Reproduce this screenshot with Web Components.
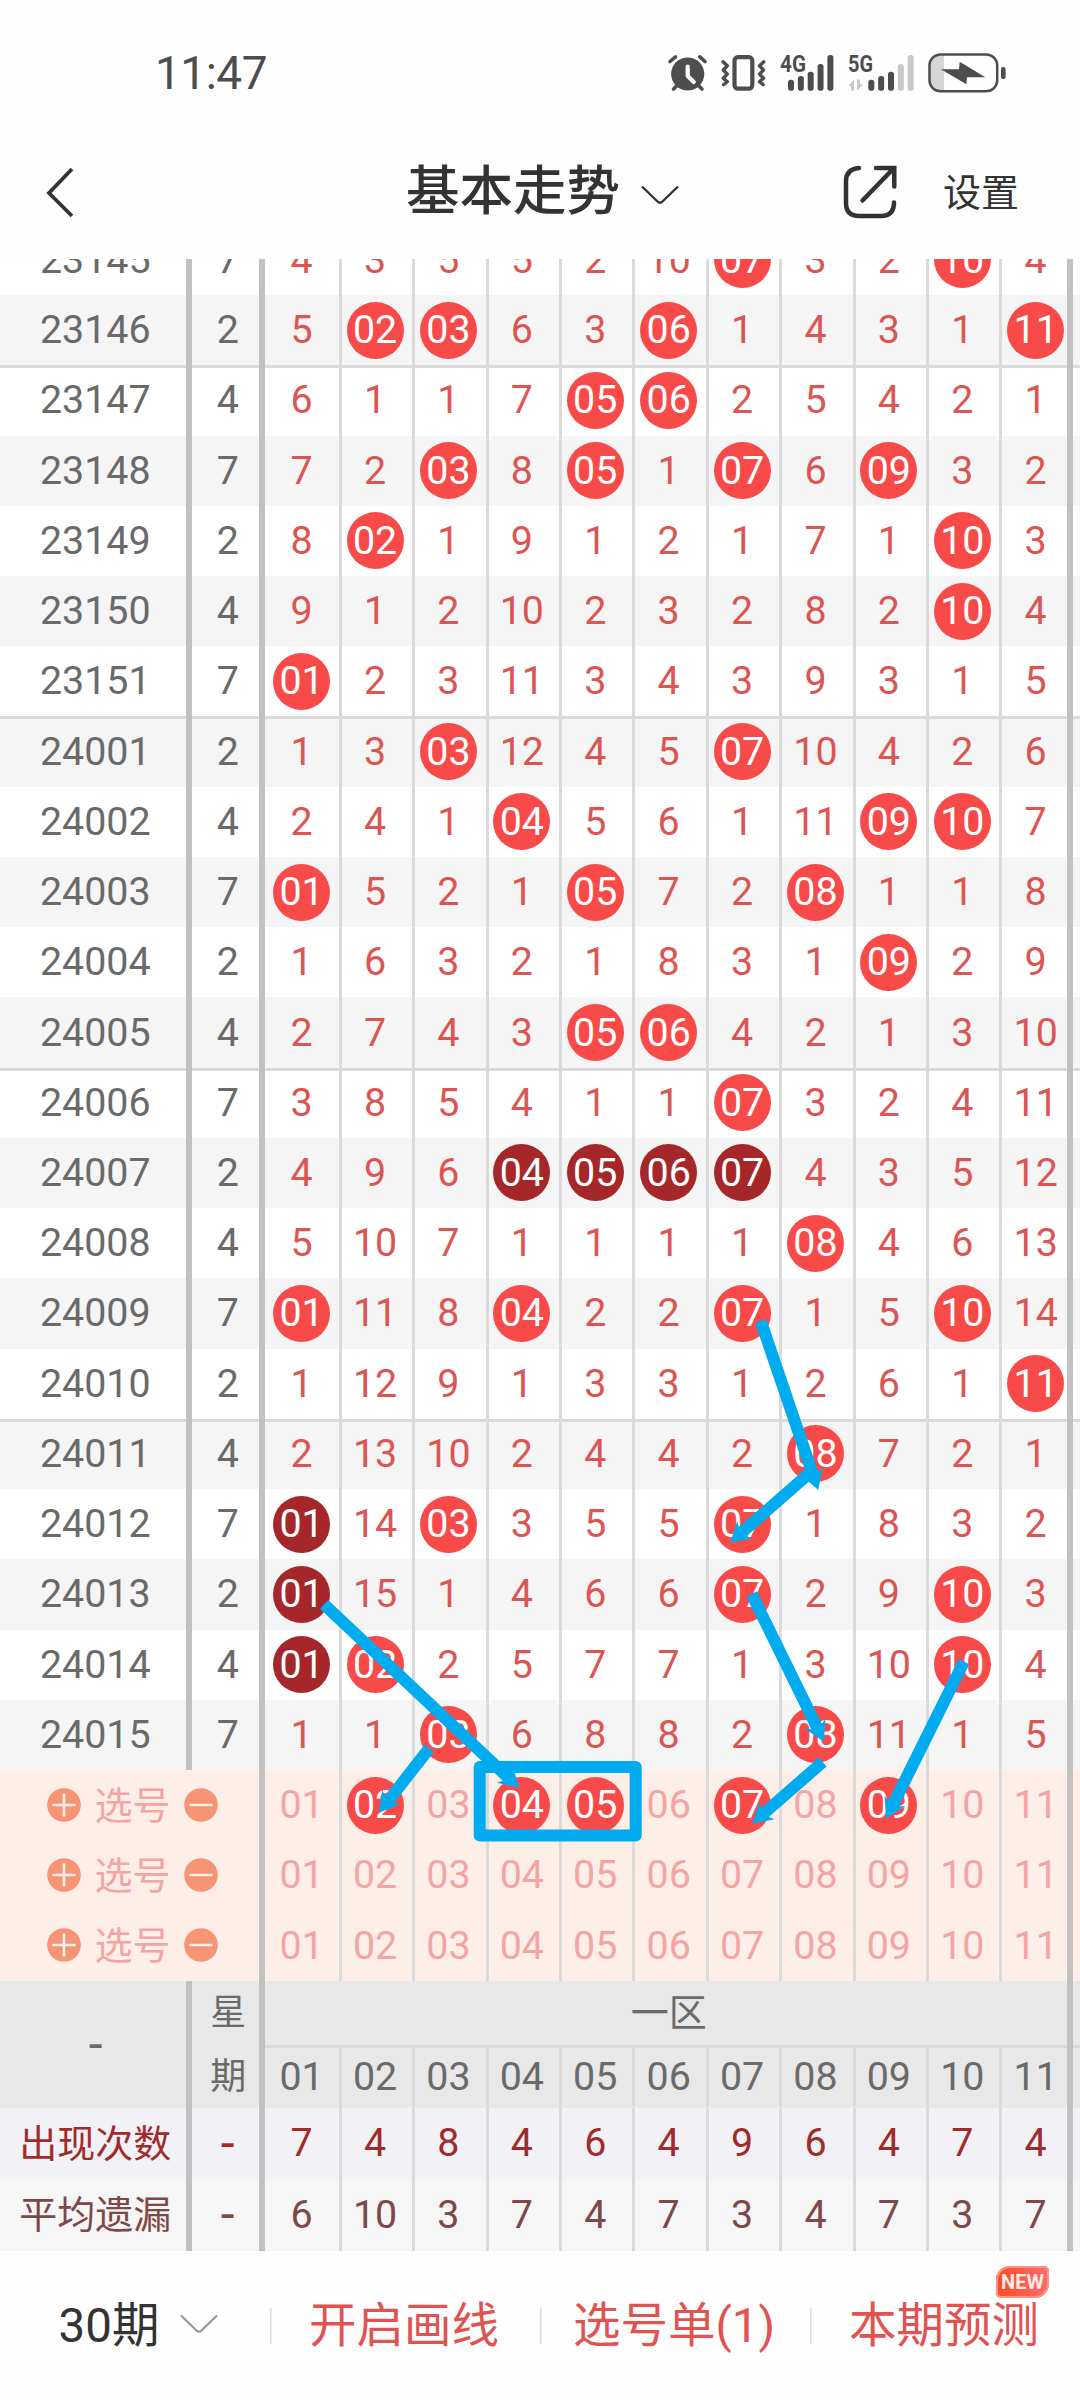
<!DOCTYPE html>
<html lang="zh-CN">
<head>
<meta charset="UTF-8">
<meta name="viewport" content="width=device-width, initial-scale=1">
<title>基本走势</title>
<style>
  html, body {
    margin: 0;
    padding: 0;
    background: #fefefe;
  }
  body {
    width: 1080px;
    height: 2400px;
    overflow: hidden;
    font-family: Roboto, "Noto Sans CJK SC", sans-serif;
    color: #333;
  }
</style>
</head>
<body>
<trend-app></trend-app>

<script>
// '*' = drawn number, '!' = drawn number in a repeated run
const draws = [
  ['23145', 7, '4 3 5 5 2 10 *07 3 2 *10 4'],
  ['23146', 2, '5 *02 *03 6 3 *06 1 4 3 1 *11'],
  ['23147', 4, '6 1 1 7 *05 *06 2 5 4 2 1'],
  ['23148', 7, '7 2 *03 8 *05 1 *07 6 *09 3 2'],
  ['23149', 2, '8 *02 1 9 1 2 1 7 1 *10 3'],
  ['23150', 4, '9 1 2 10 2 3 2 8 2 *10 4'],
  ['23151', 7, '*01 2 3 11 3 4 3 9 3 1 5'],
  ['24001', 2, '1 3 *03 12 4 5 *07 10 4 2 6'],
  ['24002', 4, '2 4 1 *04 5 6 1 11 *09 *10 7'],
  ['24003', 7, '*01 5 2 1 *05 7 2 *08 1 1 8'],
  ['24004', 2, '1 6 3 2 1 8 3 1 *09 2 9'],
  ['24005', 4, '2 7 4 3 *05 *06 4 2 1 3 10'],
  ['24006', 7, '3 8 5 4 1 1 *07 3 2 4 11'],
  ['24007', 2, '4 9 6 !04 !05 !06 !07 4 3 5 12'],
  ['24008', 4, '5 10 7 1 1 1 1 *08 4 6 13'],
  ['24009', 7, '*01 11 8 *04 2 2 *07 1 5 *10 14'],
  ['24010', 2, '1 12 9 1 3 3 1 2 6 1 *11'],
  ['24011', 4, '2 13 10 2 4 4 2 *08 7 2 1'],
  ['24012', 7, '!01 14 *03 3 5 5 *07 1 8 3 2'],
  ['24013', 2, '!01 15 1 4 6 6 *07 2 9 *10 3'],
  ['24014', 4, '!01 *02 2 5 7 7 1 3 10 *10 4'],
  ['24015', 7, '1 1 *03 6 8 8 2 *08 11 1 5']
];

const picks = [
  '01 *02 03 *04 *05 06 *07 08 *09 10 11',
  '01 02 03 04 05 06 07 08 09 10 11',
  '01 02 03 04 05 06 07 08 09 10 11'
];

// from x, y to x, y on the table
const arrows = [
  [760.7, 1062, 818.2, 1231],
  [812, 1212, 730, 1283.7],
  [751.7, 1335, 824, 1482.7],
  [822.7, 1503, 752, 1564.7],
  [964, 1402.7, 886, 1559.7],
  [324, 1345.3, 519.3, 1529],
  [429.3, 1489.3, 379, 1553.7]
];

class StatusBar extends HTMLElement {
  constructor() {
    super();
    this.attachShadow({ mode: 'open' });
  }

  connectedCallback() {
    const tops = [34.7, 31, 26.7, 19, 10];
    const bars = (x, on) => tops.map((y, i) =>
      `<rect x="${x + i * 9.85}" y="${y}" width="6" height="${45.7 - y}" rx="2.8" fill="${i < on ? '#4d4d4d' : '#c8c8c8'}"/>`
    ).join('');

    this.shadowRoot.innerHTML = `
      <style>
        :host {
          display: flex;
          justify-content: space-between;
          box-sizing: border-box;
          height: 125px;
          padding: 45px 70px 0 155px;
          color: #4d4d4d;
        }
        .time {
          font-size: 46px;
          line-height: 57px;
          letter-spacing: -.5px;
        }
        text {
          font: bold 23.5px Roboto, sans-serif;
        }
      </style>
      <span class="time">11:47</span>
      <svg width="350" height="60" viewBox="0 0 350 60" fill="#4d4d4d">
        <circle cx="27.7" cy="29" r="16.6"/>
        <path d="M27.7 21.500v9.500l6 6" fill="none" stroke="#fff" stroke-width="4.200" stroke-linecap="round"/>
        <path d="M10 16.500l5.500-4.700M39.800 11.800l5.200 4.700M13.500 44l4-4M42 44l-4-4" stroke="#4d4d4d" stroke-width="3.600" stroke-linecap="round"/>
        <rect x="74.500" y="12.200" width="17.800" height="31.500" rx="3.500" fill="none" stroke="#4d4d4d" stroke-width="4.200"/>
        <path d="M63 16.800l4.300 4-4 4.200 4 4.100-4 4.100 4 3.500-3.700 3M103.800 16.800l-4.300 4 4 4.200-4 4.100 4 4.100-4 3.500 3.700 3" fill="none" stroke="#4d4d4d" stroke-width="3.400" stroke-linecap="round" stroke-linejoin="round"/>
        <text x="120" y="27.300" textLength="26" lengthAdjust="spacingAndGlyphs">4G</text>
        ${bars(128, 5)}
        <text x="188" y="27.300" textLength="25" lengthAdjust="spacingAndGlyphs">5G</text>
        ${bars(208.300, 3)}
        <path d="M188.500 41l5.500-6.500v11h-3V41zM197 34.500v11l6-6h-3v-5z" fill="#c8c8c8"/>
        <path d="M284 10v36h-4q-10 0-10-10V20q0-10 10-10z" fill="#d6d6d6"/>
        <rect x="269.500" y="9.500" width="67.700" height="36.800" rx="11" fill="none" stroke="#4d4d4d" stroke-width="2.500"/>
        <path d="M281 24.300h18l.7-7.600 25.600 15.600H307l-.7 7z"/>
        <rect x="341" y="22" width="4.600" height="12" rx="2"/>
      </svg>
    `;
  }
}

class NavBar extends HTMLElement {
  constructor() {
    super();
    this.attachShadow({ mode: 'open' });
  }

  connectedCallback() {
    this.shadowRoot.innerHTML = `
      <style>
        :host {
          display: grid;
          grid-template-columns: 1fr auto 1fr;
          align-items: center;
          box-sizing: border-box;
          height: 134px;
          padding: 0 61px 0 46px;
        }
        svg {
          display: block;
          fill: none;
          stroke: #333;
        }
        .title {
          display: flex;
          align-items: center;
          gap: 21px;
          margin-left: 20px;
          font-size: 53.5px;
          font-weight: 500;
          line-height: 76px;
        }
        .title svg {
          margin-top: 5px;
        }
        .right {
          display: flex;
          align-items: center;
          justify-content: flex-end;
          gap: 46px;
          font-size: 38px;
        }
        .right span {
          padding-bottom: 6px;
        }
      </style>
      <svg width="30" height="52" viewBox="0 0 30 52" stroke-width="3.800">
        <path d="M26 3L3 27l23 23"/>
      </svg>
      <div class="title">
        <slot></slot>
        <svg width="38" height="20" viewBox="0 0 38 20" stroke-width="2.400">
          <path d="M1 1.500L16.500 16.500q2.500 2.400 5 0L37 1.500"/>
        </svg>
      </div>
      <div class="right">
        <svg width="54" height="54" viewBox="0 0 54 54" stroke-width="4.500" stroke-linecap="round">
          <path d="M16 3Q3 4 3 16v22q0 13 13 13h22q13 0 13-13.500M33 3h18.300v18.500M50 4L19.500 35.500"/>
        </svg>
        <span>设置</span>
      </div>
    `;
  }
}

class NumberCell extends HTMLElement {
  constructor() {
    super();
    this.attachShadow({ mode: 'open' });
  }

  connectedCallback() {
    this.shadowRoot.innerHTML = `
      <style>
        :host {
          display: flex;
          align-items: center;
          justify-content: center;
          min-width: 0;
          background: linear-gradient(#dadada, #dadada) .4px 0 / 3px 100% no-repeat;
        }
        :host(:first-of-type) {
          background: none;
        }
        span {
          display: flex;
          align-items: center;
          justify-content: center;
          box-sizing: border-box;
          width: 57px;
          height: 57px;
          padding-bottom: 1px;
          border-radius: 50%;
        }
        :host([hit]) span {
          background: #f94a4a;
          color: #fff;
        }
        :host([hit="repeat"]) span {
          background: #a62729;
        }
      </style>
      <span><slot></slot></span>
    `;
  }
}

class TrendRow extends HTMLElement {
  constructor() {
    super();
    this.attachShadow({ mode: 'open' });
  }

  connectedCallback() {
    const cells = this.getAttribute('numbers').split(' ').map((value) => {
      const hit = value[0] === '*' ? ' hit' : value[0] === '!' ? ' hit="repeat"' : '';
      return `<number-cell${hit}>${value.replace(/[*!]/, '')}</number-cell>`;
    }).join('');

    this.shadowRoot.innerHTML = `
      <style>
        :host {
          display: grid;
          grid-template-columns: 191.5px repeat(12, 73.42px);
          box-sizing: border-box;
          height: 70.24px;
          font-size: 39.4px;
          color: #dc5552;
          background: #fff;
        }
        :host([shade]) {
          background: #f5f5f5;
        }
        :host([line]) {
          box-shadow: inset 0 3px #dadada;
        }
        :host([kind="pick"]) {
          background: #feeee8;
          color: #f3a5a4;
        }
        :host([kind="count"]) {
          height: 70.6px;
          background: #f2f1f6;
          color: #a02b2b;
        }
        :host([kind="miss"]) {
          height: 72px;
          background: #f6f6f6;
          color: #7e4848;
        }
        .label, .week {
          display: flex;
          align-items: center;
          justify-content: center;
          border-right: 6px solid #c1c1c1;
          padding: 0 0 1px 5px;
          color: #6a6a6a;
        }
        :host([kind="count"]) .label, :host([kind="miss"]) .label {
          padding-bottom: 6px;
          font-size: 38px;
        }
        :host([kind="count"]) .week, :host([kind="miss"]) .week {
          font-size: 50px;
        }
        :host([kind="count"]) div, :host([kind="miss"]) div {
          color: inherit;
        }
        :host([kind="pick"]) .label {
          grid-column: span 2;
          justify-content: flex-start;
          padding-left: 47px;
          gap: 13.5px;
          font-size: 38px;
          color: inherit;
        }
        :host([kind="pick"]) .week {
          display: none;
        }
        ::slotted(span) {
          padding-bottom: 5px;
        }
      </style>
      <div class="label"><slot></slot></div>
      <div class="week">${this.getAttribute('week') || ''}</div>
      ${cells}
    `;
  }
}

class RoundButton extends HTMLElement {
  constructor() {
    super();
    this.attachShadow({ mode: 'open' });
  }

  connectedCallback() {
    const plus = this.getAttribute('type') === 'plus';
    this.shadowRoot.innerHTML = `
      <style>
        :host, svg {
          display: block;
        }
      </style>
      <svg width="34" height="34" viewBox="0 0 34 34">
        <circle cx="17" cy="17" r="16.800" fill="#f59576"/>
        <path d="M6.500 17h21${plus ? 'M17 6.500v21' : ''}" stroke="#feeee8" stroke-width="2.600" stroke-linecap="round"/>
      </svg>
    `;
  }
}

class ZoneHeader extends HTMLElement {
  constructor() {
    super();
    this.attachShadow({ mode: 'open' });
  }

  connectedCallback() {
    let cells = '';
    for (let i = 1; i <= 11; i++) {
      cells += `<number-cell>${String(i).padStart(2, '0')}</number-cell>`;
    }
    this.shadowRoot.innerHTML = `
      <style>
        :host {
          display: grid;
          grid-template-columns: 191.5px 73.42px 1fr;
          height: 127.4px;
          background: #e8e8e8;
          color: #6a6a6a;
          font-size: 39.4px;
        }
        .label, .week {
          display: flex;
          flex-direction: column;
          align-items: center;
          justify-content: center;
          border-right: 6px solid #c1c1c1;
          padding-left: 6px;
        }
        .label {
          padding-bottom: 2px;
          font-size: 50px;
        }
        .week {
          font-size: 36px;
          line-height: 64px;
        }
        .name {
          display: flex;
          align-items: center;
          justify-content: center;
          box-sizing: border-box;
          height: 64px;
          padding: 0 7.5px 7px 0;
          font-size: 38px;
        }
        .numbers {
          display: grid;
          grid-template-columns: repeat(11, 73.42px);
          box-sizing: border-box;
          height: 63.4px;
          padding-bottom: 2px;
          border-top: 3px solid #dadada;
          background: linear-gradient(#dadada, #dadada) 73.8px 100% / 3px 2px no-repeat;
        }
        number-cell {
          height: 60.4px;
          margin-top: -1px;
        }
      </style>
      <div class="label">-</div>
      <div class="week"><span>星</span><span>期</span></div>
      <div>
        <div class="name">一区</div>
        <div class="numbers">${cells}</div>
      </div>
    `;
  }
}

class DrawingLayer extends HTMLElement {
  constructor() {
    super();
    this.attachShadow({ mode: 'open' });
  }

  arrow([x1, y1, x2, y2]) {
    const length = Math.hypot(x2 - x1, y2 - y1);
    const angle = Math.atan2(y2 - y1, x2 - x1) * 180 / Math.PI;
    return `<path transform="translate(${x1} ${y1}) rotate(${angle})"
      d="M0-6H${length - 17}L${length - 20}-11.500L${length} 0L${length - 20} 11.500L${length - 17} 6H0z"/>`;
  }

  connectedCallback() {
    this.shadowRoot.innerHTML = `
      <style>
        :host {
          display: block;
          pointer-events: none;
        }
      </style>
      <svg width="1080" height="1992" viewBox="0 0 1080 1992" fill="#00abf0">
        ${arrows.map((item) => this.arrow(item)).join('')}
        <rect x="479.700" y="1508" width="156" height="68.500" fill="none" stroke="#00abf0" stroke-width="12" stroke-linejoin="round"/>
      </svg>
    `;
  }
}

class TrendTable extends HTMLElement {
  constructor() {
    super();
    this.attachShadow({ mode: 'open' });
  }

  connectedCallback() {
    const drawRows = draws.map(([id, week, numbers], i) => {
      const shade = i % 2 ? ' shade' : '';
      const line = [2, 7, 12, 17].includes(i) ? ' line' : '';
      return `<trend-row week="${week}" numbers="${numbers}"${shade}${line}>${id}</trend-row>`;
    }).join('');
    const pickRows = picks.map((numbers) => `
      <trend-row kind="pick" numbers="${numbers}">
        <round-button type="plus"></round-button><span>选号</span><round-button type="minus"></round-button>
      </trend-row>`).join('');

    this.shadowRoot.innerHTML = `
      <style>
        :host {
          display: block;
          position: relative;
          height: 1992px;
          overflow: hidden;
        }
        .rows {
          margin-top: -34.2px;
        }
        .edge {
          position: absolute;
          top: 0;
          bottom: 0;
          left: 1067px;
          width: 6px;
          background: #c1c1c1;
        }
        drawing-layer {
          position: absolute;
          top: 0;
          left: 0;
        }
      </style>
      <div class="rows">
        ${drawRows}
        ${pickRows}
        <zone-header></zone-header>
        <trend-row kind="count" week="-" numbers="7 4 8 4 6 4 9 6 4 7 4">出现次数</trend-row>
        <trend-row kind="miss" week="-" numbers="6 10 3 7 4 7 3 4 7 3 7">平均遗漏</trend-row>
      </div>
      <div class="edge"></div>
      <drawing-layer></drawing-layer>
    `;
  }
}

class BottomBar extends HTMLElement {
  constructor() {
    super();
    this.attachShadow({ mode: 'open' });
  }

  connectedCallback() {
    this.shadowRoot.innerHTML = `
      <style>
        :host {
          display: grid;
          grid-template-columns: repeat(4, 1fr);
          height: 149px;
          font-size: 47.5px;
          color: #e05351;
        }
        .item {
          position: relative;
          display: flex;
          align-items: center;
          justify-content: center;
          box-sizing: border-box;
          height: 145px;
          padding: 0 2px 4px 0;
          background: linear-gradient(#dcdcdc, #dcdcdc) 0 57px / 1.5px 36px no-repeat;
        }
        .period {
          gap: 21px;
          padding-left: 9px;
          color: #333;
          background: none;
        }
        .period svg {
          margin-top: 4px;
        }
        .badge {
          position: absolute;
          top: 15px;
          left: 186px;
          width: 53px;
          height: 32px;
          border-radius: 14px 5px 14px 5px;
          background: linear-gradient(90deg, #fb4b22, #ff6a70);
          box-shadow: inset 0 0 0 2px #ff9482;
          color: #ffe9e2;
          font: bold 20px/33px Roboto, sans-serif;
          text-align: center;
        }
      </style>
      <div class="item period">
        <span>30期</span>
        <svg width="38" height="20" viewBox="0 0 38 20" fill="none" stroke="#999" stroke-width="2.200">
          <path d="M1 1.500L16.500 16.500q2.500 2.400 5 0L37 1.500"/>
        </svg>
      </div>
      <div class="item">开启画线</div>
      <div class="item">选号单(1)</div>
      <div class="item">本期预测<span class="badge">NEW</span></div>
    `;
  }
}

class TrendApp extends HTMLElement {
  constructor() {
    super();
    this.attachShadow({ mode: 'open' });
  }

  connectedCallback() {
    this.shadowRoot.innerHTML = `
      <style>
        :host {
          display: flex;
          flex-direction: column;
          width: 1080px;
          height: 2400px;
        }
      </style>
      <status-bar></status-bar>
      <nav-bar>基本走势</nav-bar>
      <trend-table></trend-table>
      <bottom-bar></bottom-bar>
    `;
  }
}

customElements.define('status-bar', StatusBar);
customElements.define('nav-bar', NavBar);
customElements.define('number-cell', NumberCell);
customElements.define('round-button', RoundButton);
customElements.define('trend-row', TrendRow);
customElements.define('zone-header', ZoneHeader);
customElements.define('drawing-layer', DrawingLayer);
customElements.define('trend-table', TrendTable);
customElements.define('bottom-bar', BottomBar);
customElements.define('trend-app', TrendApp);
</script>
</body>
</html>
